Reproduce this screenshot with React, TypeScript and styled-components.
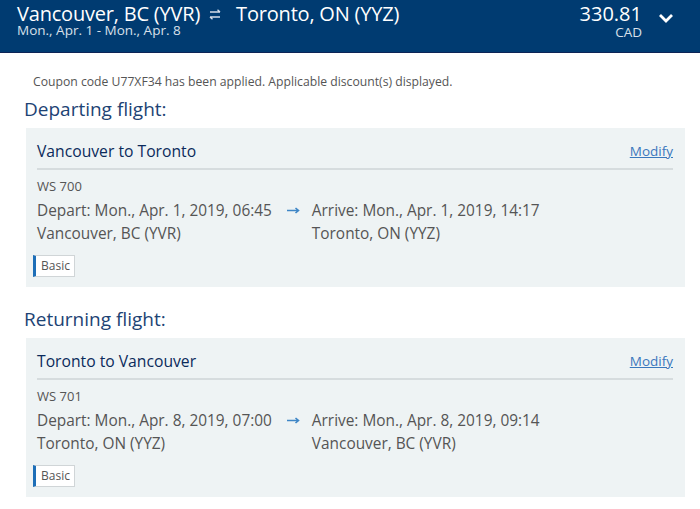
import React from 'react';
import styled, { createGlobalStyle } from 'styled-components';

const GlobalStyle = createGlobalStyle`
  html, body {
    margin: 0;
    padding: 0;
    background: #ffffff;
    font-family: 'Open Sans', 'Liberation Sans', sans-serif;
  }
`;

const Page = styled.div`
  width: 700px;
  height: 509px;
  overflow: hidden;
  background: #ffffff;
`;

const TopBar = styled.div`
  display: flex;
  justify-content: space-between;
  align-items: flex-start;
  height: 53px;
  box-sizing: border-box;
  padding: 4px 0 0 17px;
  background: #003b71;
  border-bottom: 1px solid #0d2456;
  color: #ffffff;
`;

const Route = styled.div`
  display: flex;
  flex-direction: column;
`;

const RouteTitle = styled.div`
  display: flex;
  align-items: center;
  font-size: 20px;
  line-height: 20px;
  letter-spacing: -0.2px;
`;

const SwapIcon = styled.span`
  display: inline-flex;
  margin: 0 15px 0 9px;
  color: #d5dde8;
`;

const Dates = styled.div`
  margin-top: -1px;
  font-size: 13.5px;
  line-height: 15px;
  color: #d9e0ea;
`;

const PriceArea = styled.div`
  display: flex;
  align-items: flex-start;
`;

const PriceBox = styled.div`
  display: flex;
  flex-direction: column;
  align-items: flex-end;
`;

const Price = styled.div`
  font-size: 20px;
  line-height: 20px;
`;

const Currency = styled.div`
  margin-top: 1px;
  font-size: 13.5px;
  line-height: 15px;
  color: #d9e0ea;
`;

const Chevron = styled.span`
  display: inline-flex;
  margin: 9px 26px 0 16px;
`;

const Content = styled.div`
  padding: 21px 15px 0 24px;
`;

const Coupon = styled.div`
  padding-left: 9px;
  font-size: 12.2px;
  line-height: 16px;
  color: #555555;
`;

const SectionTitle = styled.h2<{ $first?: boolean }>`
  margin: ${({ $first }) => ($first ? '7px' : '20px')} 0 0;
  font-size: 19px;
  font-weight: 400;
  line-height: 24px;
  color: #1d4374;
`;

const Card = styled.div`
  margin: 7px 0 0 2px;
  padding: 0 12px 10px 11px;
  background: #eef3f4;
`;

const CardHeader = styled.div`
  display: flex;
  justify-content: space-between;
  align-items: center;
  height: 42px;
  box-sizing: border-box;
  padding-top: 5px;
  border-bottom: 2px solid #d6dcde;
`;

const CardTitle = styled.div`
  font-size: 15.7px;
  color: #0b2a5b;
`;

const ModifyLink = styled.a`
  font-size: 13.5px;
  color: #3a78bd;
  text-decoration: underline;
  cursor: pointer;
`;

const FlightNumber = styled.div`
  margin-top: 7px;
  font-size: 13px;
  line-height: 18px;
  color: #555555;
`;

const Legs = styled.div`
  display: flex;
  align-items: flex-start;
  margin-top: 4px;
  font-size: 15.4px;
  line-height: 23px;
  color: #555555;
`;

const Leg = styled.div`
  display: flex;
  flex-direction: column;
`;

const LegArrow = styled.span`
  display: inline-flex;
  padding-top: 8px;
  margin: 0 12px 0 15px;
  color: #3f86c6;
`;

const FareTag = styled.div`
  display: inline-block;
  margin: 10px 0 0 -4px;
  padding: 0 4px 0 5px;
  height: 22px;
  box-sizing: border-box;
  background: #ffffff;
  border: 1px solid #d0d5d7;
  border-left: 3px solid #1e6fb8;
  font-size: 12px;
  line-height: 20px;
  color: #555555;
`;

interface IFlight {
  section: string;
  title: string;
  number: string;
  depart: string;
  from: string;
  arrive: string;
  to: string;
}

const flights: IFlight[] = [
  {
    section: 'Departing flight:',
    title: 'Vancouver to Toronto',
    number: 'WS 700',
    depart: 'Depart: Mon., Apr. 1, 2019, 06:45',
    from: 'Vancouver, BC (YVR)',
    arrive: 'Arrive: Mon., Apr. 1, 2019, 14:17',
    to: 'Toronto, ON (YYZ)',
  },
  {
    section: 'Returning flight:',
    title: 'Toronto to Vancouver',
    number: 'WS 701',
    depart: 'Depart: Mon., Apr. 8, 2019, 07:00',
    from: 'Toronto, ON (YYZ)',
    arrive: 'Arrive: Mon., Apr. 8, 2019, 09:14',
    to: 'Vancouver, BC (YVR)',
  },
];

const FlightCard = ({ flight, first }: { flight: IFlight; first: boolean }) => (
  <>
    <SectionTitle $first={first}>{flight.section}</SectionTitle>
    <Card>
      <CardHeader>
        <CardTitle>{flight.title}</CardTitle>
        <ModifyLink>Modify</ModifyLink>
      </CardHeader>
      <FlightNumber>{flight.number}</FlightNumber>
      <Legs>
        <Leg>
          <span>{flight.depart}</span>
          <span>{flight.from}</span>
        </Leg>
        <LegArrow>
          <svg width="13" height="7" viewBox="0 0 13 7">
            <path d="M0 3.5h11M8.5 1l3 2.5-3 2.5" stroke="currentColor" strokeWidth="1.6" fill="none" />
          </svg>
        </LegArrow>
        <Leg>
          <span>{flight.arrive}</span>
          <span>{flight.to}</span>
        </Leg>
      </Legs>
      <FareTag>Basic</FareTag>
    </Card>
  </>
);

export default function App() {
  return (
    <Page>
      <GlobalStyle />
      <TopBar>
        <Route>
          <RouteTitle>
            Vancouver, BC (YVR)
            <SwapIcon>
              <svg width="12" height="11" viewBox="0 0 12 11">
                <path
                  d="M1 3h10M8.5 0.8L11 3M11 8H1M3.5 10.2L1 8"
                  stroke="currentColor"
                  strokeWidth="1.4"
                  fill="none"
                />
              </svg>
            </SwapIcon>
            Toronto, ON (YYZ)
          </RouteTitle>
          <Dates>Mon., Apr. 1 - Mon., Apr. 8</Dates>
        </Route>
        <PriceArea>
          <PriceBox>
            <Price>330.81</Price>
            <Currency>CAD</Currency>
          </PriceBox>
          <Chevron>
            <svg width="16" height="10" viewBox="0 0 16 10">
              <path d="M2 2l6 6 6-6" stroke="#ffffff" strokeWidth="2.8" fill="none" />
            </svg>
          </Chevron>
        </PriceArea>
      </TopBar>
      <Content>
        <Coupon>Coupon code U77XF34 has been applied. Applicable discount(s) displayed.</Coupon>
        {flights.map((f, i) => (
          <FlightCard key={f.number} flight={f} first={i === 0} />
        ))}
      </Content>
    </Page>
  );
}
